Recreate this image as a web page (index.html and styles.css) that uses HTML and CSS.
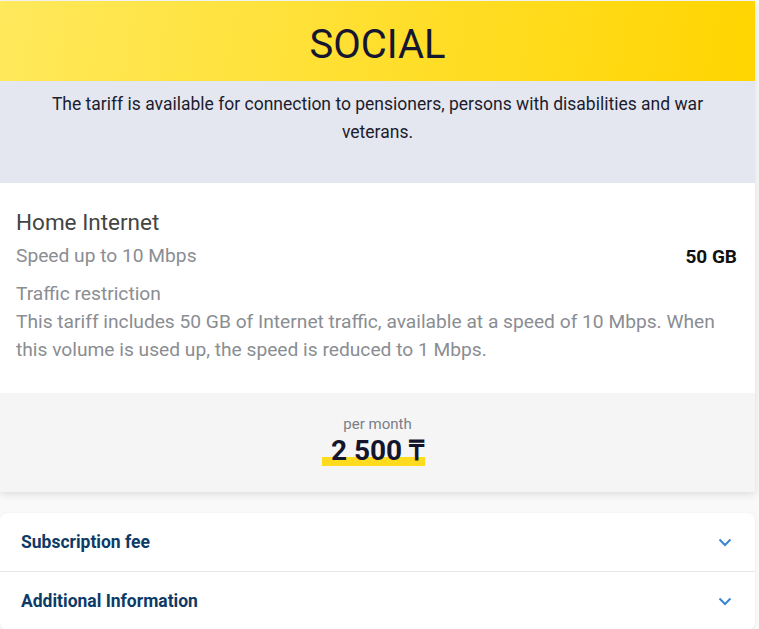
FILE: index.html
```html
<!DOCTYPE html>
<html lang="en">
<head>
    <meta charset="UTF-8">
    <meta name="viewport" content="width=device-width, initial-scale=1.0">
    <title>Social tariff</title>
    <link rel="stylesheet" href="styles.css">
</head>
<body>
    <div class="tariff-card">
        <div class="tariff-head">SOCIAL</div>
        <div class="tariff-note">
            The tariff is available for connection to pensioners, persons with disabilities and war veterans.
        </div>
        <div class="tariff-body">
            <div class="service-title">Home Internet</div>
            <div class="service-row">
                <span>Speed up to 10 Mbps</span>
                <span class="service-value">50 GB</span>
            </div>
            <div class="service-sub">Traffic restriction</div>
            <p class="service-text">This tariff includes 50 GB of Internet traffic, available at a speed of 10 Mbps. When this volume is used up, the speed is reduced to 1 Mbps.</p>
        </div>
        <div class="tariff-price">
            <div class="price-label">per month</div>
            <span class="price-value">2 500 ₸</span>
        </div>
    </div>

    <div class="accordion">
        <div class="accordion-item">
            <span>Subscription fee</span>
            <svg class="chevron" width="14" height="9" viewBox="0 0 14 9"><path d="M1.5 1.5 L7 7 L12.5 1.5" fill="none" stroke="#3a86d2" stroke-width="2"/></svg>
        </div>
        <div class="accordion-item">
            <span>Additional Information</span>
            <svg class="chevron" width="14" height="9" viewBox="0 0 14 9"><path d="M1.5 1.5 L7 7 L12.5 1.5" fill="none" stroke="#3a86d2" stroke-width="2"/></svg>
        </div>
    </div>
</body>
</html>
```

FILE: styles.css
```css
body {
    margin: 0;
    padding-top: 1px;
    font-family: Roboto, "Liberation Sans", sans-serif;
    background-color: #f9f9f9;
}
.tariff-card {
    width: 755px;
    background-color: white;
    box-shadow: 0 2px 8px rgba(0, 0, 0, 0.12);
}
.tariff-head {
    height: 80px;
    box-sizing: border-box;
    padding-top: 6px;
    display: flex;
    align-items: center;
    justify-content: center;
    font-size: 40px;
    color: #161630;
    background: linear-gradient(100deg, #ffe95c 0%, #ffd500 100%);
}
.tariff-note {
    height: 102px;
    box-sizing: border-box;
    padding: 9px 40px 0;
    text-align: center;
    font-size: 17.5px;
    line-height: 28px;
    color: #1c1c2e;
    background-color: #e4e7ef;
}
.tariff-body {
    padding: 25px 18px 29px 16px;
    color: #8a8d92;
    font-size: 19.2px;
    line-height: 28px;
}
.service-title {
    font-size: 22.5px;
    color: #444;
}
.service-row {
    display: flex;
    justify-content: space-between;
    align-items: baseline;
    margin-top: 6px;
}
.service-value {
    font-weight: bold;
    font-size: 19px;
    color: #111;
    position: relative;
    top: 1px;
}
.service-sub {
    margin-top: 10px;
}
.service-text {
    margin: 0;
}
.tariff-price {
    padding: 21px 0 26px;
    text-align: center;
    background-color: #f5f5f5;
}
.price-label {
    font-size: 15px;
    line-height: 20px;
    color: #7a7f87;
}
.price-value {
    display: inline-block;
    margin: 2px 8px 0 0;
    padding: 0 1px 0 9px;
    font-size: 28px;
    line-height: 30px;
    font-weight: bold;
    color: #14142b;
    background: linear-gradient(#ffdb1f, #ffdb1f) no-repeat left bottom / 100% 9px;
}
.accordion {
    width: 755px;
    margin-top: 21px;
    background-color: white;
    border-radius: 8px;
    box-shadow: 0 1px 4px rgba(0, 0, 0, 0.06);
}
.accordion-item {
    height: 58px;
    padding: 0 23px 0 21px;
    display: flex;
    align-items: center;
    justify-content: space-between;
    font-size: 17.5px;
    font-weight: bold;
    color: #0d3a66;
}
.accordion-item + .accordion-item {
    border-top: 1px solid #e8e8e8;
}
```
